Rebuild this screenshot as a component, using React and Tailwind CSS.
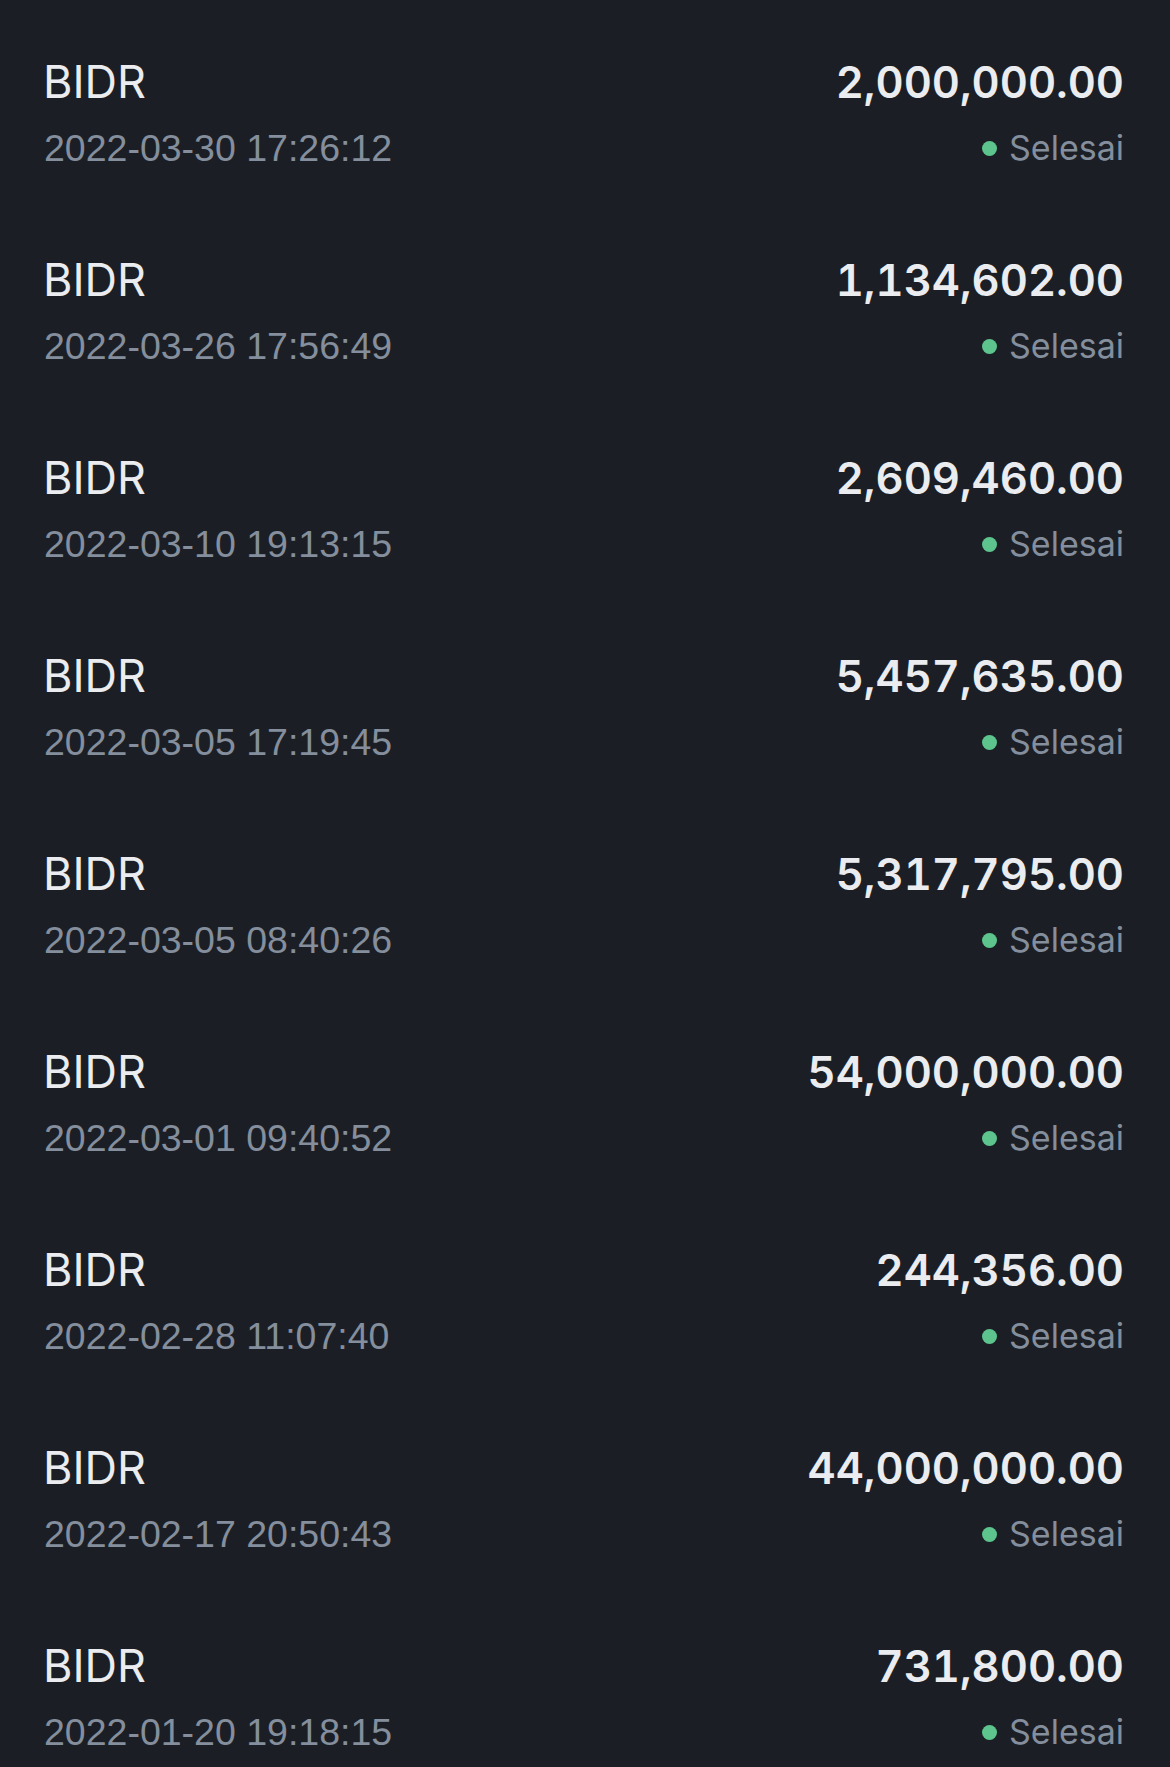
import React from 'react';

const rows = [
  { amount: '2,000,000.00', time: '2022-03-30 17:26:12' },
  { amount: '1,134,602.00', time: '2022-03-26 17:56:49' },
  { amount: '2,609,460.00', time: '2022-03-10 19:13:15' },
  { amount: '5,457,635.00', time: '2022-03-05 17:19:45' },
  { amount: '5,317,795.00', time: '2022-03-05 08:40:26' },
  { amount: '54,000,000.00', time: '2022-03-01 09:40:52' },
  { amount: '244,356.00', time: '2022-02-28 11:07:40' },
  { amount: '44,000,000.00', time: '2022-02-17 20:50:43' },
  { amount: '731,800.00', time: '2022-01-20 19:18:15' },
];

const HistoryRow = ({ amount, time }) => (
  <div className="h-[198px] pl-[44px] pr-[46px] pt-[52px] flex justify-between">
    <div className="flex flex-col">
      <span className="text-[45px] leading-[60px] text-[#eaecef] -ml-[1px]">BIDR</span>
      <span className="text-[37.5px] leading-[44px] mt-[14px] text-[#848e9c] font-['Liberation_Sans',sans-serif]">{time}</span>
    </div>
    <div className="flex flex-col items-end">
      <span className="text-[43.5px] leading-[60px] font-semibold text-[#eaecef] tabular-nums">{amount}</span>
      <div className="flex items-center gap-[12px] mt-[14px] h-[44px]">
        <span className="w-[15px] h-[15px] rounded-full bg-[#5cc48c]" />
        <span className="text-[34px] leading-[44px] text-[#848e9c]">Selesai</span>
      </div>
    </div>
  </div>
);

export default function App() {
  return (
    <div className="min-h-screen w-[1170px] bg-[#1b1f25] font-['Inter',sans-serif] overflow-hidden h-[1767px]">
      {rows.map((r, i) => (
        <HistoryRow key={i} {...r} />
      ))}
    </div>
  );
}
